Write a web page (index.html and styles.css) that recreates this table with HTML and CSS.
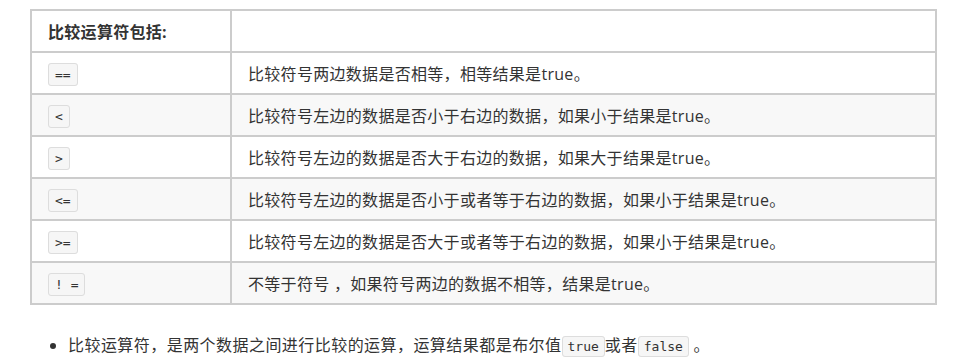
FILE: index.html
```html
<!DOCTYPE html>
<html lang="zh">
<head>
<meta charset="utf-8">
<link rel="stylesheet" href="styles.css">
</head>
<body>
<div class="page">
  <table class="ops">
    <colgroup><col class="c1"><col class="c2"></colgroup>
    <thead>
      <tr><th>比较运算符包括:</th><th></th></tr>
    </thead>
    <tbody>
      <tr><td><code>==</code></td><td>比较符号两边数据是否相等，相等结果是true。</td></tr>
      <tr><td><code>&lt;</code></td><td>比较符号左边的数据是否小于右边的数据，如果小于结果是true。</td></tr>
      <tr><td><code>&gt;</code></td><td>比较符号左边的数据是否大于右边的数据，如果大于结果是true。</td></tr>
      <tr><td><code>&lt;=</code></td><td>比较符号左边的数据是否小于或者等于右边的数据，如果小于结果是true。</td></tr>
      <tr><td><code>&gt;=</code></td><td>比较符号左边的数据是否大于或者等于右边的数据，如果小于结果是true。</td></tr>
      <tr><td><code>! =</code></td><td>不等于符号 ，如果符号两边的数据不相等，结果是true。</td></tr>
    </tbody>
  </table>
  <ul class="notes">
    <li>比较运算符，是两个数据之间进行比较的运算，运算结果都是布尔值<code>true</code>或者<code>false</code> 。</li>
  </ul>
</div>
</body>
</html>
```
FILE: styles.css
```css
html, body {
  margin: 0;
  padding: 0;
  background: #fff;
}
body {
  font-family: "Open Sans", "Noto Sans CJK SC", sans-serif;
  font-size: 16px;
  color: #333;
}
.page {
  padding: 9px 16px 0 30px;
}
.ops {
  border-collapse: collapse;
  width: 907px;
  table-layout: fixed;
}
.ops .c1 { width: 200px; }
.ops th, .ops td {
  border: 2px solid #ccc;
  height: 42px;
  padding: 0 16px;
  text-align: left;
  vertical-align: middle;
  box-sizing: border-box;
  white-space: nowrap;
  letter-spacing: 0.3px;
}
.ops th {
  font-weight: bold;
}
.ops tbody tr:nth-child(even) td {
  background: #f8f8f8;
}
code {
  font-family: "DejaVu Sans Mono", monospace;
  font-size: 13px;
  letter-spacing: 0;
  background: #f6f6f6;
  border: 1px solid #ddd;
  border-radius: 3px;
  padding: 3px 6px;
  white-space: pre;
}
.notes {
  margin: 28px 0 0 0;
  padding-left: 38px;
}
.notes li {
  line-height: 24px;
  letter-spacing: 0.45px;
}
.notes code {
  padding: 2px 5px;
}
```
